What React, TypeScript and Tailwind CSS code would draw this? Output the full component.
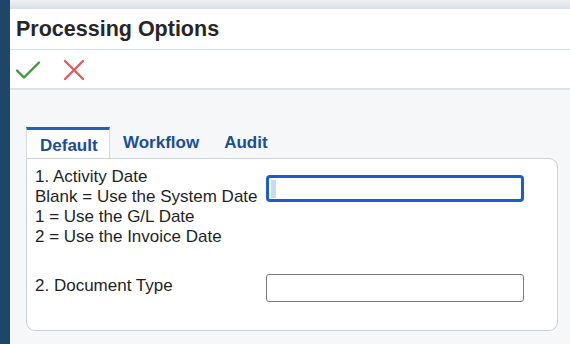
import React from 'react';

const Check = () => (
  <svg width="26" height="20" viewBox="0 0 26 20" fill="none">
    <path d="M2 10.5 L9 17.5 L24 2.5" stroke="#3f9a3f" strokeWidth="2.4" strokeLinecap="round" strokeLinejoin="round" />
  </svg>
);

const Cross = () => (
  <svg width="22" height="22" viewBox="0 0 22 22" fill="none">
    <path d="M2 2 L20 20 M20 2 L2 20" stroke="#e25a5a" strokeWidth="2.4" strokeLinecap="round" />
  </svg>
);

const lines = [
  '1. Activity Date',
  'Blank = Use the System Date',
  '1 = Use the G/L Date',
  '2 = Use the Invoice Date',
];

export default function App() {
  return (
    <div
      className="flex h-[344px] w-[570px] overflow-hidden bg-[#f5f7f9]"
      style={{ fontFamily: '"Liberation Sans", Arial, sans-serif' }}
    >
      <div className="w-[10px] shrink-0 bg-[#1f4568]" />
      <div className="flex flex-1 flex-col">
        <div className="h-[9px] bg-gradient-to-b from-[#eef1f4] to-[#d9dfe5]" />
        <div className="flex h-[41px] items-center border-b border-[#d9dee3] bg-white pl-[6px]">
          <span className="text-[21.5px] font-bold text-[#262626]">Processing Options</span>
        </div>
        <div className="flex h-[40px] items-center gap-[22px] border-b-2 border-[#dde2e7] bg-white pl-[5px] pt-[1px]">
          <Check />
          <Cross />
        </div>
        <div className="pl-[16px] pt-[37px]">
          <div className="flex items-end text-[17px] font-bold text-[#1a4f94]">
            <div className="h-[31px] w-[84px] border-x border-t-[3px] border-x-[#d4dbe2] border-t-[#1f63b6] bg-white pl-[13px] pt-[3px]">
              Default
            </div>
            <div className="ml-[13px] pb-[3px]">Workflow</div>
            <div className="ml-[25px] pb-[3px]">Audit</div>
          </div>
          <div className="h-[173px] w-[532px] rounded-[9px] rounded-tl-none border border-[#c8d2db] bg-white px-[8px] pt-[8px] text-[17px] text-[#1f1f1f]">
            <div className="flex">
              <div className="w-[231px] leading-[20px]">
                {lines.map((l) => (
                  <div key={l}>{l}</div>
                ))}
              </div>
              <div className="mt-[8px] flex h-[27px] w-[258px] items-center rounded-[4px] border-[3px] border-[#1a5fcb] pl-[2px]">
                <div className="h-[18px] w-[5px] bg-[#c6dcf6]" />
              </div>
            </div>
            <div className="mt-[27px] flex">
              <div className="w-[231px] pt-[2px] leading-[20px]">2. Document Type</div>
              <div className="h-[28px] w-[258px] rounded-[3px] border border-[#7a7a7a]" />
            </div>
          </div>
        </div>
      </div>
    </div>
  );
}
